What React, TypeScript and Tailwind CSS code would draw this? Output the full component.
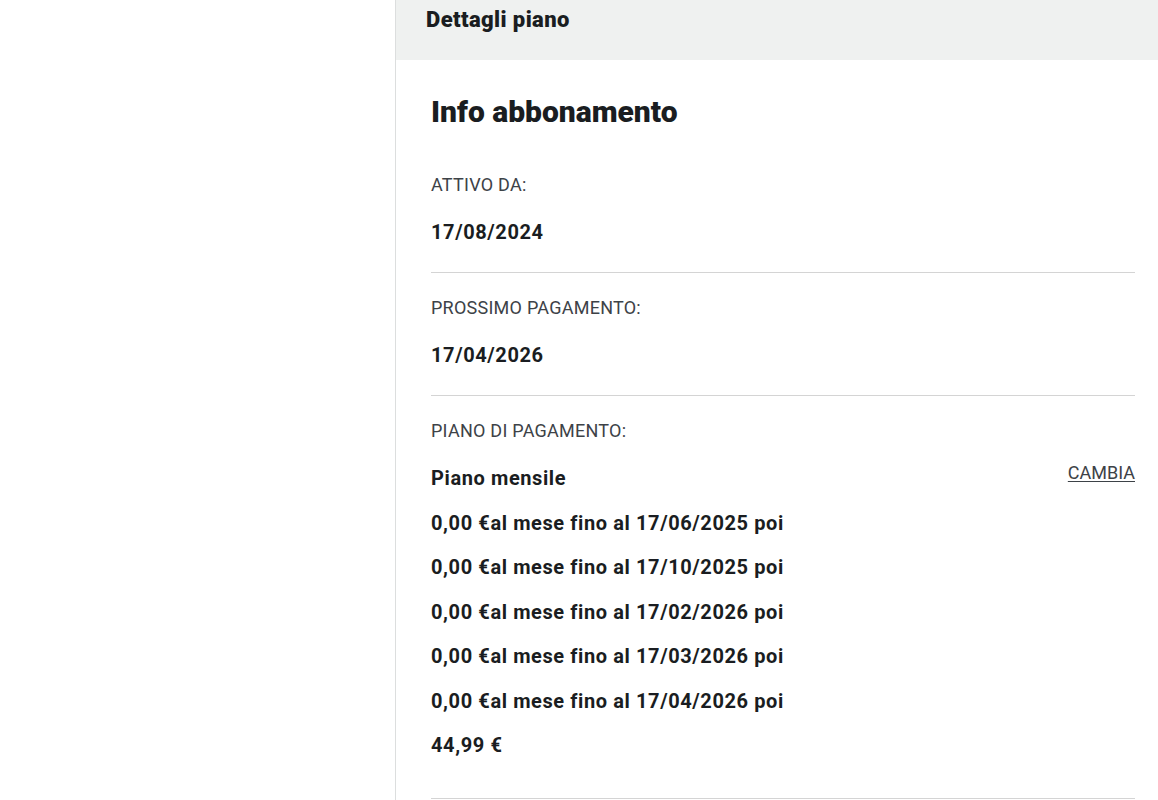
export default function App() {
  const rates = [
    '0,00 €al mese fino al 17/06/2025 poi',
    '0,00 €al mese fino al 17/10/2025 poi',
    '0,00 €al mese fino al 17/02/2026 poi',
    '0,00 €al mese fino al 17/03/2026 poi',
    '0,00 €al mese fino al 17/04/2026 poi',
  ]

  return (
    <div className="flex min-h-[800px] bg-white font-['Roboto',sans-serif] text-[#1a1d21]">
      {/* Left empty column */}
      <div className="w-[395px] shrink-0" />

      <div className="flex-1 border-l border-[#dcdede]">
        {/* Panel header */}
        <div className="h-[60px] bg-[#eff1f0] pl-[30px] pt-[5px]">
          <h2 className="text-[22px] font-black leading-[30px] tracking-[0.4px]">Dettagli piano</h2>
        </div>

        <div className="pl-[35px] pr-[23px]">
          <h1 className="mt-[34px] text-[30px] font-black leading-[36px]">Info abbonamento</h1>

          {/* Active since */}
          <div className="mt-[43px] border-b border-[#d4d4d4] pb-[26px]">
            <div className="text-[18px] leading-[24px] tracking-[0.25px] text-[#3d4247]">ATTIVO DA:</div>
            <div className="mt-[21px] text-[20px] font-bold leading-[28px] tracking-[0.6px]">17/08/2024</div>
          </div>

          {/* Next payment */}
          <div className="border-b border-[#d4d4d4] pt-[23px] pb-[26px]">
            <div className="text-[18px] leading-[24px] tracking-[0.25px] text-[#3d4247]">PROSSIMO PAGAMENTO:</div>
            <div className="mt-[21px] text-[20px] font-bold leading-[28px] tracking-[0.6px]">17/04/2026</div>
          </div>

          {/* Payment plan */}
          <div className="border-b border-[#d4d4d4] pt-[23px] pb-[39px]">
            <div className="text-[18px] leading-[24px] tracking-[0.25px] text-[#3d4247]">PIANO DI PAGAMENTO:</div>
            <div className="mt-[21px] flex items-start justify-between">
              <div className="text-[20px] font-bold leading-[28px] tracking-[0.6px]">Piano mensile</div>
              <a href="#" className="-mt-[5px] text-[18px] leading-[28px] text-[#3d4247] underline underline-offset-2">
                CAMBIA
              </a>
            </div>
            {rates.map((r, i) => (
              <div key={i} className="mt-[16.5px] text-[20px] font-bold leading-[28px] tracking-[0.6px]">
                {r}
              </div>
            ))}
            <div className="mt-[16.5px] text-[20px] font-bold leading-[28px] tracking-[0.6px]">44,99 €</div>
          </div>
        </div>
      </div>
    </div>
  )
}
